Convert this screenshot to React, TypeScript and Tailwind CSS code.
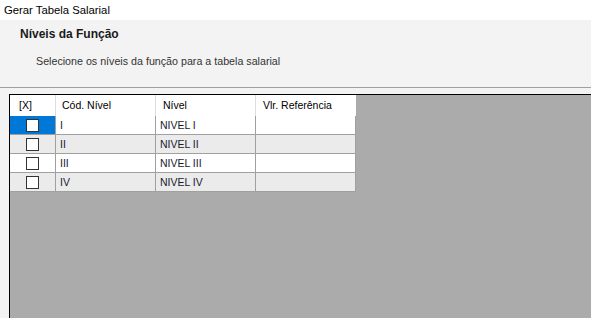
const rows = [
  { cod: 'I', nivel: 'NIVEL I' },
  { cod: 'II', nivel: 'NIVEL II' },
  { cod: 'III', nivel: 'NIVEL III' },
  { cod: 'IV', nivel: 'NIVEL IV' },
]

export default function App() {
  return (
    <div className="w-[591px] h-[318px] overflow-hidden flex flex-col bg-[#f3f3f3] font-['Liberation_Sans',Arial,sans-serif] text-black">
      <div className="h-[20px] bg-white pl-[4px] text-[11.3px] leading-[20px] text-black">Gerar Tabela Salarial</div>

      <div className="h-[68px] border-b border-[#a0a0a0] bg-[#f3f3f3]">
        <div className="pl-[20px] pt-[6px] text-[12px] font-bold leading-[16px] text-[#1a1a1a]">Níveis da Função</div>
        <div className="pl-[36px] pt-[12px] text-[10.7px] leading-[14px] text-[#333]">
          Selecione os níveis da função para a tabela salarial
        </div>
      </div>

      <div className="flex-1 flex flex-col pt-[6px] pl-[9px]">
        <div className="flex-1 border-l border-t border-black bg-[#ababab]">
          <div className="w-[346px] text-[10.5px]">
            <div className="flex h-[21px] bg-white leading-[21px]">
              <div className="w-[46px] border-r border-[#dcdcdc] pl-[9px]">[X]</div>
              <div className="w-[100px] border-r border-[#dcdcdc] pl-[6px]">Cód. Nível</div>
              <div className="w-[100px] border-r border-[#dcdcdc] pl-[7px]">Nível</div>
              <div className="w-[100px] pl-[7px]">Vlr. Referência</div>
            </div>
            {rows.map((r, i) => (
              <div
                key={r.cod}
                className={`flex h-[19px] border-b border-[#a0a0a0] leading-[18px] ${i % 2 === 1 ? 'bg-[#ebebeb]' : 'bg-white'}`}
              >
                <div
                  className={`w-[46px] border-r border-[#a0a0a0] flex items-center justify-center ${i === 0 ? 'bg-[#0078d7]' : ''}`}
                >
                  <div className="w-[13px] h-[13px] border border-[#333] bg-white" />
                </div>
                <div className="w-[100px] border-r border-[#a0a0a0] pl-[4px] text-[#1a1a2e]">{r.cod}</div>
                <div className="w-[100px] border-r border-[#a0a0a0] pl-[4px] text-[#1a1a2e]">{r.nivel}</div>
                <div className="w-[100px] border-r border-[#a0a0a0]" />
              </div>
            ))}
          </div>
        </div>
      </div>
    </div>
  )
}
